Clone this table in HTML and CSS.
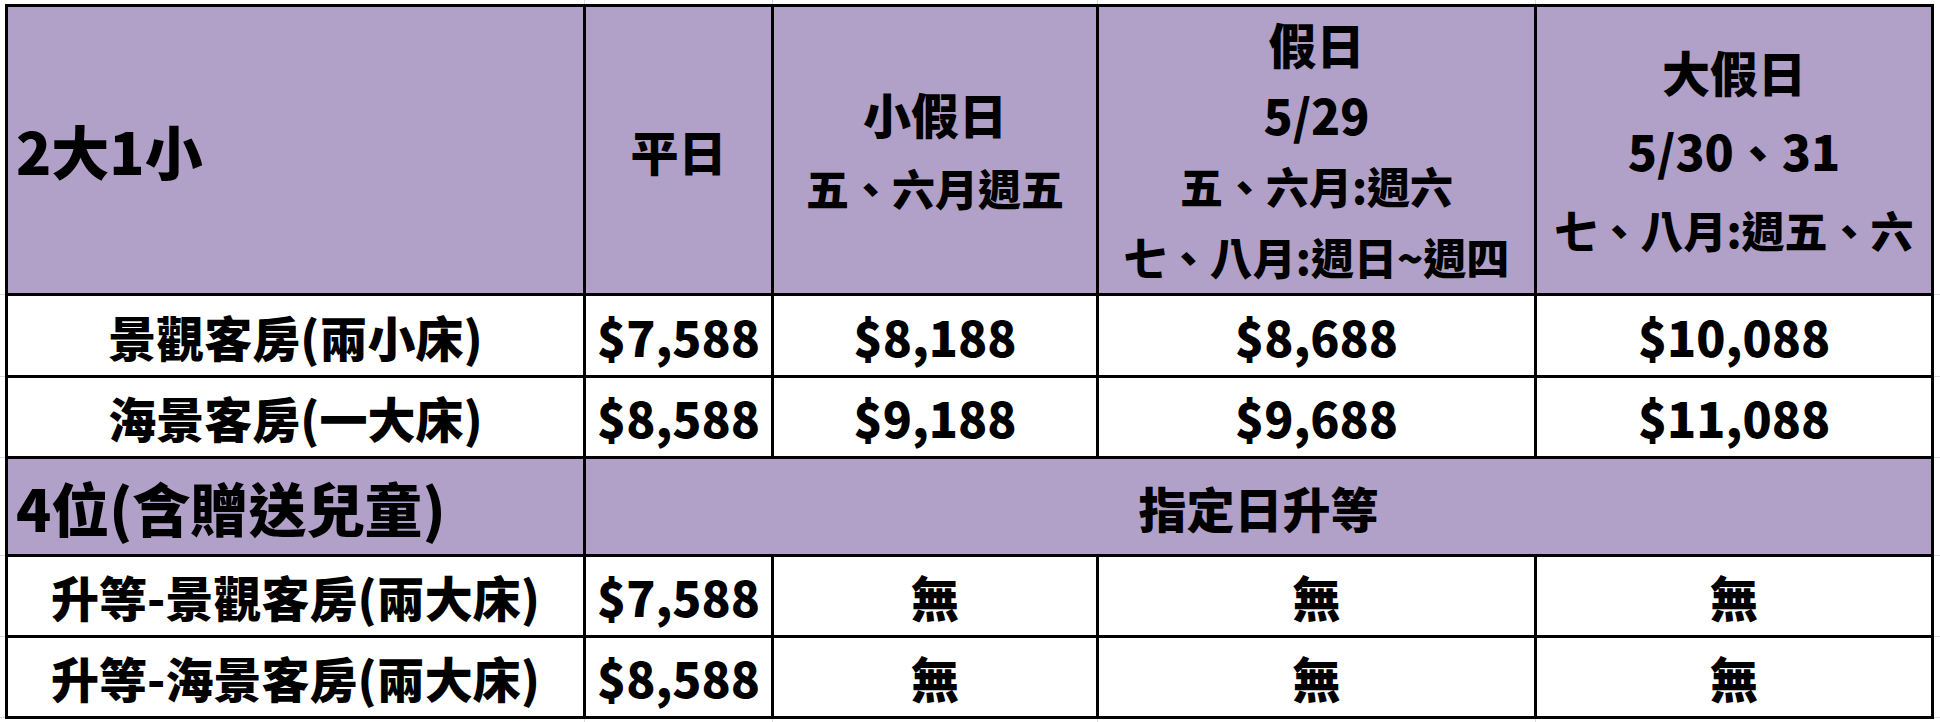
FILE: index.html
```html
<!DOCTYPE html>
<html lang="zh-Hant">
<head>
<meta charset="utf-8">
<title>房價表</title>
<link rel="stylesheet" href="styles.css">
</head>
<body>
<div class="sheet">
  <div class="cell head label-big left">2大1小</div>
  <div class="cell head"><span class="l48">平日</span></div>
  <div class="cell head lh74">
    <div class="stack">
      <span class="l48">小假日</span>
      <span class="l43">五、六月週五</span>
    </div>
  </div>
  <div class="cell head lh71">
    <div class="stack">
      <span class="l48">假日</span>
      <span class="l48">5/29</span>
      <span class="l43">五、六月:週六</span>
      <span class="l43">七、八月:週日~週四</span>
    </div>
  </div>
  <div class="cell head lh79">
    <div class="stack">
      <span class="l48">大假日</span>
      <span class="l48">5/30、31</span>
      <span class="l43">七、八月:週五、六</span>
    </div>
  </div>

  <div class="cell">景觀客房(兩小床)</div>
  <div class="cell">$7,588</div>
  <div class="cell">$8,188</div>
  <div class="cell">$8,688</div>
  <div class="cell">$10,088</div>

  <div class="cell">海景客房(一大床)</div>
  <div class="cell">$8,588</div>
  <div class="cell">$9,188</div>
  <div class="cell">$9,688</div>
  <div class="cell">$11,088</div>

  <div class="cell head label-big left">4位(含贈送兒童)</div>
  <div class="cell head span4">指定日升等</div>

  <div class="cell">升等-景觀客房(兩大床)</div>
  <div class="cell">$7,588</div>
  <div class="cell">無</div>
  <div class="cell">無</div>
  <div class="cell">無</div>

  <div class="cell">升等-海景客房(兩大床)</div>
  <div class="cell">$8,588</div>
  <div class="cell">無</div>
  <div class="cell">無</div>
  <div class="cell">無</div>
</div>
</body>
</html>
```

FILE: styles.css
```css
html, body {
  margin: 0;
  padding: 0;
}

body {
  width: 1940px;
  height: 722px;
  overflow: hidden;
  background-color: #ffffff;
  background-image:
    linear-gradient(to right, transparent 584px, #d9d9d9 584px, #d9d9d9 585px, transparent 585px),
    linear-gradient(to right, transparent 772px, #d9d9d9 772px, #d9d9d9 773px, transparent 773px),
    linear-gradient(to right, transparent 1097px, #d9d9d9 1097px, #d9d9d9 1098px, transparent 1098px),
    linear-gradient(to right, transparent 1535px, #d9d9d9 1535px, #d9d9d9 1536px, transparent 1536px),
    linear-gradient(to bottom, transparent 294px, #d9d9d9 294px, #d9d9d9 295px, transparent 295px),
    linear-gradient(to bottom, transparent 376px, #d9d9d9 376px, #d9d9d9 377px, transparent 377px),
    linear-gradient(to bottom, transparent 457px, #d9d9d9 457px, #d9d9d9 458px, transparent 458px),
    linear-gradient(to bottom, transparent 555px, #d9d9d9 555px, #d9d9d9 556px, transparent 556px),
    linear-gradient(to bottom, transparent 636px, #d9d9d9 636px, #d9d9d9 637px, transparent 637px),
    linear-gradient(to bottom, transparent 717px, #d9d9d9 717px, #d9d9d9 718px, transparent 718px);
  font-family: "Noto Sans CJK TC", "Noto Sans CJK SC", "Noto Sans", sans-serif;
  font-weight: 900;
  color: #000000;
  padding: 4px 0 0 5px;
  box-sizing: border-box;
}

.sheet {
  display: grid;
  grid-template-columns: 575px 185px 322px 435px 394px;
  grid-template-rows: 286px 79px 78px 95px 78px 78px;
  gap: 3px;
  padding: 3px;
  background: #000000;
  width: max-content;
}

.cell {
  background: #ffffff;
  display: flex;
  align-items: center;
  justify-content: center;
  text-align: center;
  font-size: 48px;
  line-height: 1;
  white-space: nowrap;
}

.head {
  background: #b1a0c7;
}

.left {
  justify-content: flex-start;
  padding-left: 8px;
}

.label-big {
  font-size: 58px;
}

.span4 {
  grid-column: span 4;
}

.stack {
  display: flex;
  flex-direction: column;
  align-items: center;
}

.l48 {
  font-size: 48px;
}

.l43 {
  font-size: 43px;
}

.lh71 .stack > span {
  line-height: 71px;
}

.lh74 .stack > span {
  line-height: 74px;
}

.lh79 .stack > span {
  line-height: 79px;
}
```
